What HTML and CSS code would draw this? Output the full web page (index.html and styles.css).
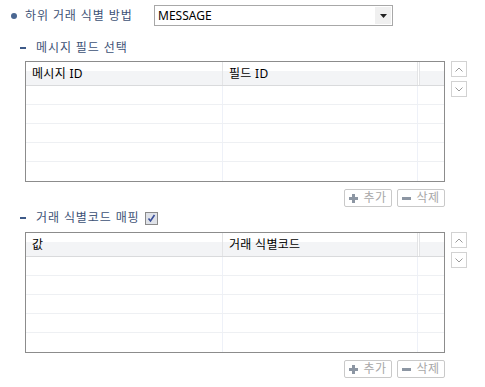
FILE: index.html
```html
<!DOCTYPE html>
<html lang="ko">
<head>
<meta charset="utf-8">
<link rel="stylesheet" href="styles.css">
</head>
<body>
<div class="page">
  <div class="method-row">
    <span class="bullet"></span>
    <span class="method-label">하위 거래 식별 방법</span>
    <div class="combo">
      <span class="combo-text">MESSAGE</span>
      <span class="combo-btn"><svg width="7" height="4" viewBox="0 0 7 4"><path d="M0 0H7L3.5 4Z" fill="#222"/></svg></span>
    </div>
  </div>

  <div class="section-title title1"><span class="dash"></span><span>메시지 필드 선택</span></div>
  <div class="table-row">
    <div class="grid">
      <div class="ghead">
        <div class="hc c1">메시지 ID</div>
        <div class="hc c2">필드 ID</div>
        <div class="hc c3"></div>
      </div>
      <div class="grow"><div class="bc c1"></div><div class="bc c2"></div><div class="bc c3"></div></div>
      <div class="grow"><div class="bc c1"></div><div class="bc c2"></div><div class="bc c3"></div></div>
      <div class="grow"><div class="bc c1"></div><div class="bc c2"></div><div class="bc c3"></div></div>
      <div class="grow"><div class="bc c1"></div><div class="bc c2"></div><div class="bc c3"></div></div>
      <div class="grow last"><div class="bc c1"></div><div class="bc c2"></div><div class="bc c3"></div></div>
    </div>
    <div class="spin">
      <span class="spin-btn"><svg width="8" height="5" viewBox="0 0 8 5"><path d="M0.5 4.5L4 1L7.5 4.5" fill="none" stroke="#9a9a9a" stroke-width="1"/></svg></span>
      <span class="spin-btn"><svg width="8" height="5" viewBox="0 0 8 5"><path d="M0.5 0.5L4 4L7.5 0.5" fill="none" stroke="#9a9a9a" stroke-width="1"/></svg></span>
    </div>
  </div>
  <div class="actions">
    <span class="act"><svg width="9" height="9" viewBox="0 0 9 9"><path d="M3 0H6V3H9V6H6V9H3V6H0V3H3Z" fill="#8c96a3"/></svg><span>추가</span></span>
    <span class="act"><svg width="9" height="9" viewBox="0 0 9 9"><path d="M0 3H9V6H0Z" fill="#8c96a3"/></svg><span>삭제</span></span>
  </div>

  <div class="section-title title2"><span class="dash"></span><span>거래 식별코드 매핑</span>
    <span class="check"><svg width="9" height="9" viewBox="0 0 9 9"><path d="M1.5 4.5L3.5 7L7.5 1" fill="none" stroke="#3a4f9a" stroke-width="1.6"/></svg></span>
  </div>
  <div class="table-row">
    <div class="grid">
      <div class="ghead">
        <div class="hc c1">값</div>
        <div class="hc c2">거래 식별코드</div>
        <div class="hc c3"></div>
      </div>
      <div class="grow"><div class="bc c1"></div><div class="bc c2"></div><div class="bc c3"></div></div>
      <div class="grow"><div class="bc c1"></div><div class="bc c2"></div><div class="bc c3"></div></div>
      <div class="grow"><div class="bc c1"></div><div class="bc c2"></div><div class="bc c3"></div></div>
      <div class="grow"><div class="bc c1"></div><div class="bc c2"></div><div class="bc c3"></div></div>
      <div class="grow last"><div class="bc c1"></div><div class="bc c2"></div><div class="bc c3"></div></div>
    </div>
    <div class="spin">
      <span class="spin-btn"><svg width="8" height="5" viewBox="0 0 8 5"><path d="M0.5 4.5L4 1L7.5 4.5" fill="none" stroke="#9a9a9a" stroke-width="1"/></svg></span>
      <span class="spin-btn"><svg width="8" height="5" viewBox="0 0 8 5"><path d="M0.5 0.5L4 4L7.5 0.5" fill="none" stroke="#9a9a9a" stroke-width="1"/></svg></span>
    </div>
  </div>
  <div class="actions">
    <span class="act"><svg width="9" height="9" viewBox="0 0 9 9"><path d="M3 0H6V3H9V6H6V9H3V6H0V3H3Z" fill="#8c96a3"/></svg><span>추가</span></span>
    <span class="act"><svg width="9" height="9" viewBox="0 0 9 9"><path d="M0 3H9V6H0Z" fill="#8c96a3"/></svg><span>삭제</span></span>
  </div>
</div>
</body>
</html>
```

FILE: styles.css
```css
html, body {
  margin: 0;
  padding: 0;
  background: #ffffff;
}
body {
  font-family: "Noto Sans", "Noto Sans CJK KR", sans-serif;
  font-size: 12px;
  color: #000;
}
.page {
  width: 485px;
  height: 387px;
  display: flex;
  flex-direction: column;
}
.method-row {
  display: flex;
  align-items: center;
  height: 21px;
  margin-top: 5px;
}
.bullet {
  width: 6px;
  height: 6px;
  border-radius: 50%;
  background: #4a6792;
  margin-left: 11px;
}
.method-label {
  margin-left: 8px;
  width: 129px;
  color: #3d5276;
  line-height: 16px;
  letter-spacing: 0.9px;
}
.combo {
  width: 237px;
  height: 19px;
  border: 1px solid #a8a8a8;
  display: flex;
  align-items: center;
  justify-content: space-between;
}
.combo-text {
  margin-left: 3px;
  line-height: 16px;
  font-size: 12px;
}
.combo-btn {
  width: 16px;
  height: 17px;
  margin-right: 1px;
  background: #f0f0f0;
  display: flex;
  align-items: center;
  justify-content: center;
}
.section-title {
  display: flex;
  align-items: center;
  height: 16px;
  color: #3d5276;
  line-height: 16px;
  letter-spacing: 0.9px;
}
.title1 { margin-top: 14px; }
.title2 { margin-top: 3px; }
.dash {
  width: 6px;
  height: 2px;
  background: #3e5a88;
  margin-left: 20px;
  margin-right: 10px;
}
.check {
  width: 11px;
  height: 11px;
  border: 1px solid #8a8a8a;
  background: #dfe2e8;
  margin-left: 5px;
  display: flex;
  align-items: center;
  justify-content: center;
}
.table-row {
  display: flex;
  align-items: flex-start;
  margin-left: 25px;
  margin-top: 5px;
}
.title2 + .table-row { margin-top: 6px; }
.grid {
  width: 418px;
  height: 119px;
  border: 1px solid #8c8c8c;
  display: flex;
  flex-direction: column;
}
.ghead {
  display: flex;
  height: 23px;
  border-bottom: 1px solid #d9dadc;
  background: linear-gradient(#ffffff 0, #ffffff 40%, #f3f4f6 40%, #f3f4f6 100%);
}
.hc {
  line-height: 23px;
  padding-left: 6px;
  box-sizing: border-box;
  white-space: nowrap;
  letter-spacing: 0.3px;
}
.c1 { width: 196px; }
.c2 { width: 195px; }
.c3 { width: 27px; }
.ghead .c2 { border-left: 1px solid #e3e4e6; }
.ghead .c3 { border-left: 1px solid #e3e4e6; box-shadow: inset 1px 0 0 #ffffff, inset 2px 0 0 #e3e4e6; }
.grow {
  display: flex;
  height: 18px;
  border-bottom: 1px solid #eef0f3;
}
.grow.last {
  height: 19px;
  border-bottom: none;
}
.bc { box-sizing: border-box; }
.grow .c2, .grow .c3 { border-left: 1px solid #eef1f8; }
.spin {
  display: flex;
  flex-direction: column;
  gap: 4px;
  margin-left: 6px;
}
.spin-btn {
  width: 14px;
  height: 14px;
  border: 1px solid #d2d2d2;
  display: flex;
  align-items: center;
  justify-content: center;
  background: #fff;
}
.actions {
  display: flex;
  justify-content: flex-end;
  gap: 5px;
  width: 445px;
  margin-top: 7px;
}
.act {
  width: 46px;
  height: 16px;
  border: 1px solid #c9c9c9;
  border-radius: 2px;
  display: flex;
  align-items: center;
  justify-content: center;
  gap: 5px;
  color: #a8a8a8;
  font-size: 12px;
  line-height: 14px;
  letter-spacing: 0.5px;
}
```
